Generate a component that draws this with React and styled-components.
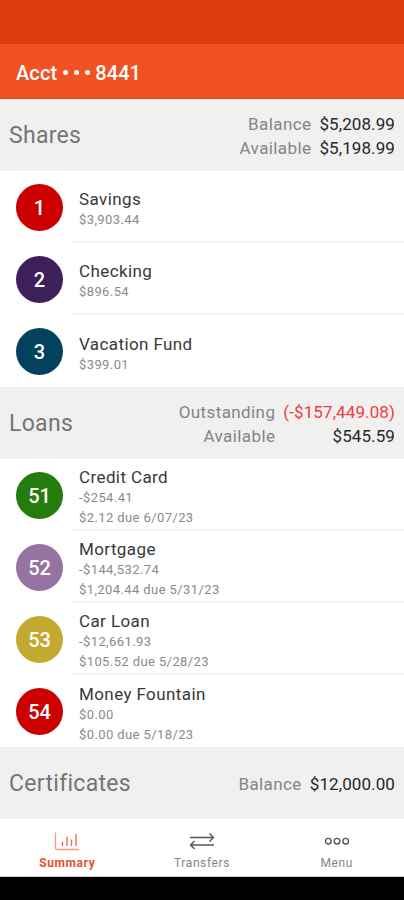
import React from 'react';
import styled, { createGlobalStyle } from 'styled-components';

const GlobalStyle = createGlobalStyle`
  * {
    box-sizing: border-box;
  }

  body {
    margin: 0;
    background-color: #ffffff;
    font-family: Roboto, 'Liberation Sans', sans-serif;
  }
`;

const Screen = styled.div`
  display: flex;
  flex-direction: column;
  height: 900px;
  overflow: hidden;
`;

const StatusBar = styled.div`
  height: 44px;
  background-color: #dc3d10;
`;

const Header = styled.header`
  display: flex;
  align-items: center;
  height: 55px;
  padding: 3px 16px 0;
  background-color: #f05223;
  border-bottom: 1px solid #ea4210;
`;

const HeaderTitle = styled.h1`
  display: flex;
  align-items: center;
  margin: 0;
  font-size: 20px;
  font-weight: 500;
  line-height: 24px;
  letter-spacing: 0.1px;
  color: #ffffff;
`;

const Dots = styled.span`
  display: flex;
  gap: 6px;
  margin: 0 5px 0 6px;
`;

const Dot = styled.i`
  width: 5px;
  height: 5px;
  border-radius: 50%;
  background-color: #ffffff;
`;

const SectionHeader = styled.div`
  display: flex;
  align-items: center;
  justify-content: space-between;
  height: 72px;
  padding: 2px 9px 0;
  background-color: #f0f0f0;
`;

const SectionTitle = styled.h2`
  margin: 0;
  font-size: 23px;
  font-weight: 400;
  line-height: 28px;
  letter-spacing: 0.3px;
  color: #757575;
`;

const Totals = styled.div`
  display: grid;
  grid-template-columns: auto auto;
  column-gap: 8px;
  text-align: right;
  font-size: 17px;
  line-height: 24px;
`;

const TotalLabel = styled.span`
  letter-spacing: 0.4px;
  color: #858585;
`;

const TotalValue = styled.span`
  letter-spacing: 0.1px;
  color: ${(props) => (props.$negative ? '#f23b3b' : '#262626')};
`;

const AccountRow = styled.div`
  display: flex;
  height: 72px;
  padding-left: 16px;
  background-color: #ffffff;
`;

const Badge = styled.div`
  display: flex;
  align-items: center;
  justify-content: center;
  flex: none;
  width: 47px;
  height: 47px;
  margin: 13px 9px 0 0;
  border-radius: 50%;
  background-color: ${(props) => props.$color};
  font-size: 20px;
  font-weight: 500;
  color: #ffffff;
`;

const AccountInfo = styled.div`
  display: flex;
  flex: 1;
  flex-direction: column;
  justify-content: center;
  padding: 5px 0 0 7px;
  border-bottom: ${(props) => (props.$last ? 'none' : '2px solid #f2f2f2')};
`;

const AccountName = styled.div`
  font-size: 17px;
  line-height: 22px;
  letter-spacing: 0.4px;
  color: #383838;
`;

const AccountDetail = styled.div`
  font-size: 13px;
  line-height: 20px;
  letter-spacing: 0.4px;
  color: #8a8a8a;
`;

const TabBar = styled.nav`
  display: grid;
  grid-template-columns: repeat(3, 1fr);
  height: 58px;
  background-color: #ffffff;
  border-bottom: 1px solid #d0d0d0;
`;

const Tab = styled.div`
  display: flex;
  flex-direction: column;
  align-items: center;
  padding-top: 10px;
  font-size: 12px;
  line-height: 16px;
  letter-spacing: 0.6px;
  font-weight: ${(props) => (props.$active ? 700 : 400)};
  color: ${(props) => (props.$active ? '#e2502d' : '#858585')};

  svg {
    display: block;
    margin-bottom: 2px;
  }
`;

const SystemBar = styled.div`
  height: 23px;
  background-color: #000000;
`;

const SummaryIcon = () => (
  <svg width="26" height="24" viewBox="0 0 26 24" fill="none" stroke="#ee6d50" strokeWidth="1.4">
    <path d="M1.5 3.5V18.5Q1.5 20.5 3.5 20.5H25" stroke="#f29c88" />
    <path d="M8.5 12.5V17M13 7.5V17M17.5 10.5V17M22 5V17" />
  </svg>
);

const TransfersIcon = () => (
  <svg width="26" height="24" viewBox="0 0 26 24" fill="none" stroke="#555555" strokeWidth="1.4">
    <path d="M1 8.5H24M20.5 4.5L24.5 8.5L20.5 12.5" />
    <path d="M25 16H2M5.5 12L1.5 16L5.5 20" />
  </svg>
);

const MenuIcon = () => (
  <svg width="26" height="24" viewBox="0 0 26 24" fill="none" stroke="#555555" strokeWidth="1.4">
    <circle cx="4.3" cy="12.2" r="2.8" />
    <circle cx="13" cy="12.2" r="2.8" />
    <circle cx="21.7" cy="12.2" r="2.8" />
  </svg>
);

const sections = [
  {
    title: 'Shares',
    totals: [
      { label: 'Balance', value: '$5,208.99' },
      { label: 'Available', value: '$5,198.99' }
    ],
    accounts: [
      { id: 1, name: 'Savings', color: '#cc0000', details: ['$3,903.44'] },
      { id: 2, name: 'Checking', color: '#3d2059', details: ['$896.54'] },
      { id: 3, name: 'Vacation Fund', color: '#03425c', details: ['$399.01'] }
    ]
  },
  {
    title: 'Loans',
    totals: [
      { label: 'Outstanding', value: '(-$157,449.08)', negative: true },
      { label: 'Available', value: '$545.59' }
    ],
    accounts: [
      { id: 51, name: 'Credit Card', color: '#247c0d', details: ['-$254.41', '$2.12 due 6/07/23'] },
      { id: 52, name: 'Mortgage', color: '#9673a0', details: ['-$144,532.74', '$1,204.44 due 5/31/23'] },
      { id: 53, name: 'Car Loan', color: '#c4a931', details: ['-$12,661.93', '$105.52 due 5/28/23'] },
      { id: 54, name: 'Money Fountain', color: '#cc0000', details: ['$0.00', '$0.00 due 5/18/23'] }
    ]
  },
  {
    title: 'Certificates',
    totals: [{ label: 'Balance', value: '$12,000.00' }],
    accounts: []
  }
];

const App = () => {
  return (
    <Screen>
      <GlobalStyle />
      <StatusBar />
      <Header>
        <HeaderTitle>
          Acct
          <Dots>
            <Dot />
            <Dot />
            <Dot />
          </Dots>
          8441
        </HeaderTitle>
      </Header>

      {sections.map((section) => (
        <section key={section.title}>
          <SectionHeader>
            <SectionTitle>{section.title}</SectionTitle>
            <Totals>
              {section.totals.map((total) => (
                <React.Fragment key={total.label}>
                  <TotalLabel>{total.label}</TotalLabel>
                  <TotalValue $negative={total.negative}>{total.value}</TotalValue>
                </React.Fragment>
              ))}
            </Totals>
          </SectionHeader>
          {section.accounts.map((account, index) => (
            <AccountRow key={account.id}>
              <Badge $color={account.color}>{account.id}</Badge>
              <AccountInfo $last={index === section.accounts.length - 1}>
                <AccountName>{account.name}</AccountName>
                {account.details.map((detail) => (
                  <AccountDetail key={detail}>{detail}</AccountDetail>
                ))}
              </AccountInfo>
            </AccountRow>
          ))}
        </section>
      ))}

      <TabBar>
        <Tab $active>
          <SummaryIcon />
          Summary
        </Tab>
        <Tab>
          <TransfersIcon />
          Transfers
        </Tab>
        <Tab>
          <MenuIcon />
          Menu
        </Tab>
      </TabBar>
      <SystemBar />
    </Screen>
  );
};

export default App;
